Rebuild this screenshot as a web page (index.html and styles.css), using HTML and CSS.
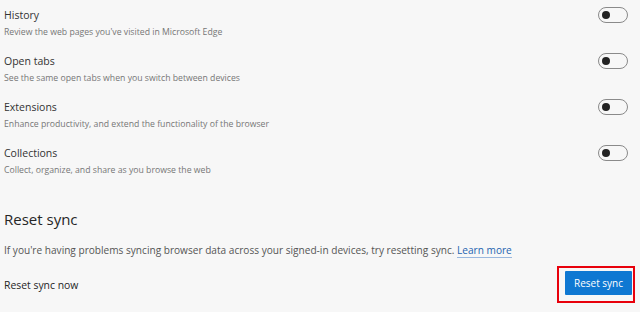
FILE: index.html
```html
<!DOCTYPE html>
<html>
<head>
<meta charset="utf-8">
<link rel="stylesheet" href="styles.css">
</head>
<body>
<div class="page">
  <div class="list">
    <div class="row">
      <div class="text">
        <div class="title">History</div>
        <div class="desc">Review the web pages you've visited in Microsoft Edge</div>
      </div>
      <span class="toggle"><span class="knob"></span></span>
    </div>
    <div class="row">
      <div class="text">
        <div class="title">Open tabs</div>
        <div class="desc">See the same open tabs when you switch between devices</div>
      </div>
      <span class="toggle"><span class="knob"></span></span>
    </div>
    <div class="row">
      <div class="text">
        <div class="title">Extensions</div>
        <div class="desc">Enhance productivity, and extend the functionality of the browser</div>
      </div>
      <span class="toggle"><span class="knob"></span></span>
    </div>
    <div class="row">
      <div class="text">
        <div class="title">Collections</div>
        <div class="desc">Collect, organize, and share as you browse the web</div>
      </div>
      <span class="toggle"><span class="knob"></span></span>
    </div>
  </div>
  <h2 class="heading">Reset sync</h2>
  <p class="para">If you're having problems syncing browser data across your signed-in devices, try resetting sync. <a class="link" href="#">Learn more</a></p>
  <div class="reset-row">
    <span class="reset-label">Reset sync now</span>
    <span class="highlight"><button class="btn">Reset sync</button></span>
  </div>
</div>
</body>
</html>
```
FILE: styles.css
```css
html, body {
  margin: 0;
  padding: 0;
  background: #f7f7f7;
}
body {
  font-family: "Open Sans", "Noto Sans", sans-serif;
  color: #333;
  width: 640px;
  height: 312px;
  overflow: hidden;
}
.page {
  padding: 0 5px 0 4px;
}
.list {
  display: flex;
  flex-direction: column;
}
.row {
  display: flex;
  justify-content: space-between;
  align-items: flex-start;
  height: 46px;
  box-sizing: border-box;
  padding: 7px 7px 0 0;
}
.title {
  font-size: 10.5px;
  line-height: 16px;
  color: #333;
}
.desc {
  font-size: 8.7px;
  line-height: 14px;
  margin-top: 2px;
  color: #767676;
}
.toggle {
  width: 30px;
  height: 16px;
  box-sizing: border-box;
  border: 1px solid #8a8a8a;
  border-radius: 8px;
  display: flex;
  align-items: center;
  padding-left: 3px;
}
.knob {
  width: 8px;
  height: 8px;
  border-radius: 50%;
  background: #222;
}
.heading {
  margin: 24px 0 0 0;
  font-size: 15px;
  line-height: 22px;
  font-weight: normal;
  color: #262626;
}
.para {
  margin: 12px 0 0 0;
  font-size: 10.1px;
  line-height: 16px;
  color: #555;
}
.link {
  color: #1f64b0;
  text-decoration: none;
  border-bottom: 1px solid #9ab8de;
}
.reset-row {
  display: flex;
  justify-content: space-between;
  align-items: center;
  margin-top: 8px;
}
.reset-label {
  font-size: 10.4px;
  color: #262626;
  margin-top: 1px;
}
.highlight {
  display: inline-flex;
  border: 2px solid #e8000b;
  padding: 3px 1px 6px 6px;
}
.btn {
  width: 67px;
  height: 24px;
  background: #0f78d2;
  color: #fff;
  border: none;
  border-radius: 1px;
  font-family: "Open Sans", "Noto Sans", sans-serif;
  font-size: 10px;
  font-weight: 500;
  padding: 0;
}
```
